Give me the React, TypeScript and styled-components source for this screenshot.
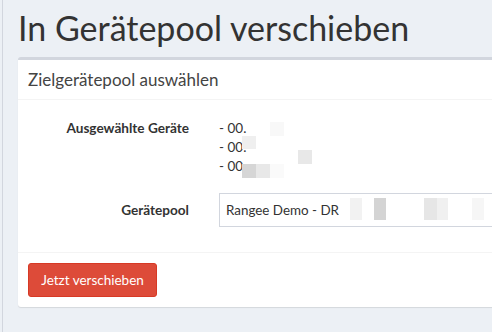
import React from "react";
import styled, { createGlobalStyle } from "styled-components";

const GlobalStyle = createGlobalStyle`
  html, body {
    margin: 0;
    padding: 0;
    background: #ecf0f5;
    overflow: hidden;
  }
  body {
    font-family: Lato, "Noto Sans", sans-serif;
    color: #333;
  }
`;

const Wrapper = styled.div`
  margin-left: 2px;
  border-left: 1px solid #d2d6de;
  min-height: 332px;
  padding-left: 15px;
  overflow: hidden;
  box-sizing: border-box;
`;

const Title = styled.h1`
  margin: 0;
  padding-top: 8px;
  font-size: 34px;
  font-weight: 400;
  line-height: 40px;
  color: #333;
  height: 49px;
`;

const Card = styled.div`
  width: 620px;
  background: #fff;
  border-top: 3px solid #d2d6de;
  border-radius: 3px;
  box-shadow: 0 1px 1px rgba(0, 0, 0, 0.1);
`;

const CardHeader = styled.div`
  height: 39px;
  padding: 0 10px;
  display: flex;
  align-items: center;
  border-bottom: 1px solid #f4f4f4;
  font-size: 17px;
  color: #444;
`;

const CardBody = styled.div`
  padding: 19px 10px 25px;
  display: grid;
  grid-template-columns: 161px 1fr;
  column-gap: 30px;
  row-gap: 17px;
  align-items: start;
  font-size: 13px;
  border-bottom: 1px solid #f4f4f4;
`;

const Label = styled.div<{ $center?: boolean }>`
  text-align: right;
  font-weight: 700;
  font-size: 13.6px;
  line-height: 19px;
  align-self: ${(p) => (p.$center ? "center" : "start")};
`;

const DeviceList = styled.div`
  position: relative;
  line-height: 19px;
  font-size: 13.5px;
`;

const DeviceRow = styled.div`
  white-space: nowrap;
`;

const Redaction = styled.span`
  position: absolute;
  display: block;
`;

const Select = styled.div`
  position: relative;
  height: 34px;
  box-sizing: border-box;
  border: 1px solid #d2d6de;
  padding: 0 6px;
  display: flex;
  align-items: center;
  font-size: 13.4px;
  color: #333;
`;

const SelectText = styled.span`
  white-space: nowrap;
`;

const CardFooter = styled.div`
  padding: 10px;
`;

const DangerButton = styled.button`
  height: 34px;
  width: 129px;
  box-sizing: border-box;
  background: #dd4b39;
  border: 1px solid #d73925;
  border-radius: 3px;
  color: #fff;
  font-family: inherit;
  font-size: 13.5px;
  padding: 0;
  cursor: pointer;
`;

type Block = { x: number; y: number; w: number; h: number; c: string };

const deviceBlocks: Block[] = [
  { x: 51, y: 3, w: 14, h: 14, c: "#f8f8f8" },
  { x: 23, y: 17, w: 14, h: 13, c: "#efefef" },
  { x: 79, y: 31, w: 14, h: 14, c: "#e8e8e8" },
  { x: 23, y: 45, w: 14, h: 14, c: "#d6d6d6" },
  { x: 37, y: 45, w: 14, h: 14, c: "#e8e8e8" },
  { x: 51, y: 45, w: 14, h: 14, c: "#fafafa" },
];

const selectBlocks: Block[] = [
  { x: 119, y: 0, w: 11, h: 32, c: "#ffffff" },
  { x: 130, y: 4, w: 12, h: 22, c: "#f2f2f2" },
  { x: 154, y: 4, w: 12, h: 22, c: "#d4d4d4" },
  { x: 204, y: 4, w: 13, h: 22, c: "#e6e6e6" },
  { x: 217, y: 4, w: 11, h: 22, c: "#f0f0f0" },
  { x: 252, y: 4, w: 12, h: 22, c: "#f6f6f6" },
];

const renderBlocks = (blocks: Block[]) =>
  blocks.map((b, i) => (
    <Redaction
      key={i}
      style={{ left: b.x, top: b.y, width: b.w, height: b.h, background: b.c }}
    />
  ));

export default function App() {
  return (
    <>
      <GlobalStyle />
      <Wrapper>
        <Title>In Gerätepool verschieben</Title>
        <Card>
          <CardHeader>Zielgerätepool auswählen</CardHeader>
          <CardBody>
            <Label>Ausgewählte Geräte</Label>
            <DeviceList>
              <DeviceRow>- 00.</DeviceRow>
              <DeviceRow>- 00.</DeviceRow>
              <DeviceRow>- 00.</DeviceRow>
              {renderBlocks(deviceBlocks)}
            </DeviceList>
            <Label $center>Gerätepool</Label>
            <Select>
              <SelectText>Rangee Demo - DRG</SelectText>
              {renderBlocks(selectBlocks)}
            </Select>
          </CardBody>
          <CardFooter>
            <DangerButton>Jetzt verschieben</DangerButton>
          </CardFooter>
        </Card>
      </Wrapper>
    </>
  );
}
